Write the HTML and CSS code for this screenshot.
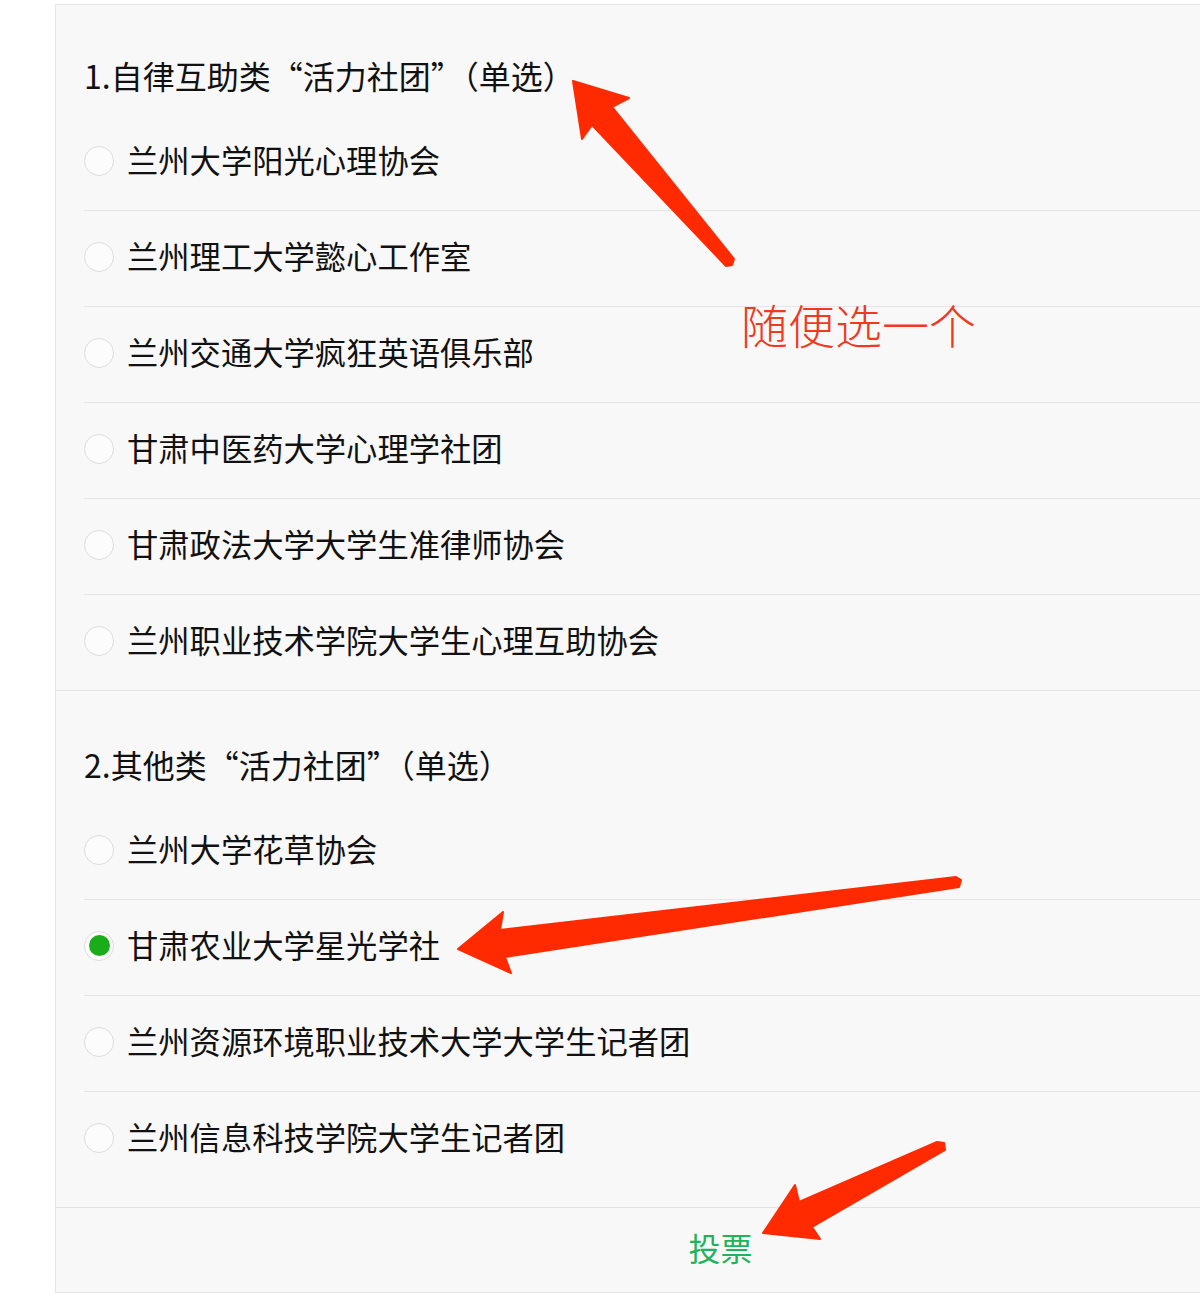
FILE: index.html
```html
<!DOCTYPE html>
<html lang="zh-CN">
<head>
<meta charset="utf-8">
<title>活力社团投票</title>
<link rel="stylesheet" href="styles.css">
</head>
<body>
<div class="page">
  <form class="card">
    <section class="group group-first">
      <h2 class="title">1.自律互助类“活力社团”（单选）</h2>
      <label class="option"><span class="radio"></span><span class="label">兰州大学阳光心理协会</span></label>
      <label class="option"><span class="radio"></span><span class="label">兰州理工大学懿心工作室</span></label>
      <label class="option"><span class="radio"></span><span class="label">兰州交通大学疯狂英语俱乐部</span></label>
      <label class="option"><span class="radio"></span><span class="label">甘肃中医药大学心理学社团</span></label>
      <label class="option"><span class="radio"></span><span class="label">甘肃政法大学大学生准律师协会</span></label>
      <label class="option"><span class="radio"></span><span class="label">兰州职业技术学院大学生心理互助协会</span></label>
    </section>
    <section class="group group-second">
      <h2 class="title">2.其他类“活力社团”（单选）</h2>
      <label class="option"><span class="radio"></span><span class="label">兰州大学花草协会</span></label>
      <label class="option"><span class="radio checked"></span><span class="label">甘肃农业大学星光学社</span></label>
      <label class="option"><span class="radio"></span><span class="label">兰州资源环境职业技术大学大学生记者团</span></label>
      <label class="option"><span class="radio"></span><span class="label">兰州信息科技学院大学生记者团</span></label>
    </section>
    <div class="submit">投票</div>
  </form>

  <div class="note">随便选一个</div>

  <svg class="arrows" width="1200" height="1304" viewBox="0 0 1200 1304" xmlns="http://www.w3.org/2000/svg">
    <g fill="#ff2a00" stroke="#ff2a00" stroke-width="2" stroke-linejoin="round">
      <polygon points="573,81 629,98 612,107 734,259 732,265 726,266 592,125 582,139"/>
      <polygon points="458,949 503,912 500,930 956,877 961,880 959,887 505,957 511,973"/>
      <polygon points="763,1233 795,1185 799,1202 937,1142 944,1143 945,1150 812,1227 820,1239"/>
    </g>
  </svg>
</div>
</body>
</html>
```

FILE: styles.css
```css
html, body {
  margin: 0;
  padding: 0;
  background: #ffffff;
  overflow: hidden;
}

body {
  font-family: "Noto Sans CJK SC", "Noto Sans", sans-serif;
  color: #111111;
}

.page {
  position: relative;
  width: 1200px;
  height: 1304px;
  padding: 4px 0 0 55px;
  box-sizing: border-box;
  overflow: hidden;
}

.card {
  width: 1330px;
  margin: 0;
  background: #f8f8f8;
  border: 1px solid #e6e6e6;
  border-right: none;
  box-sizing: border-box;
}

.group {
  display: flex;
  flex-direction: column;
  border-bottom: 1px solid #e3e3e3;
}

.title {
  margin: 0;
  font-size: 32px;
  font-weight: normal;
  line-height: 36px;
  padding: 52px 0 22px 28px;
  color: #111111;
}

.group-second .title {
  padding-top: 55px;
}

.group-second {
  padding-bottom: 20px;
}

.option {
  display: flex;
  align-items: center;
  height: 95px;
  margin-left: 28px;
  border-bottom: 1px solid #e6e6e6;
}

.option:last-child {
  border-bottom: none;
}

.radio {
  width: 30px;
  height: 30px;
  box-sizing: border-box;
  border: 1px solid #dddddd;
  border-radius: 50%;
  background: #fcfcfc;
  display: flex;
  align-items: center;
  justify-content: center;
  flex: none;
  margin-top: -4px;
}

.radio.checked::after {
  content: "";
  width: 21px;
  height: 21px;
  border-radius: 50%;
  background: #1aad19;
}

.label {
  margin-left: 13px;
  font-size: 31.3px;
  line-height: 36px;
  color: #111111;
  margin-top: -6px;
}

.submit {
  height: 84px;
  box-sizing: border-box;
  padding-bottom: 7px;
  display: flex;
  align-items: center;
  justify-content: center;
  font-size: 32px;
  color: #1fb35b;
}

.note {
  position: absolute;
  left: 741px;
  top: 294px;
  font-size: 47px;
  line-height: 60px;
  font-weight: 300;
  color: #f0391f;
}

.arrows {
  position: absolute;
  left: 0;
  top: 0;
  pointer-events: none;
}
```
